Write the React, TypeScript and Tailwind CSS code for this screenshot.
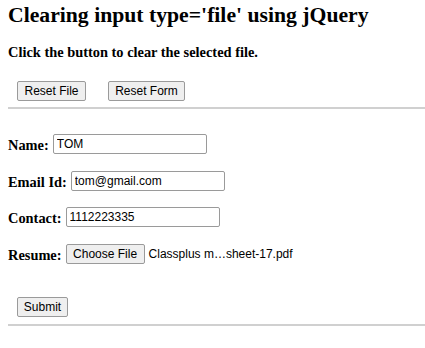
import React from 'react';

const serif = "font-['Liberation_Serif','Times_New_Roman',serif]";
const sans = "font-['Liberation_Sans',Arial,sans-serif]";

const Btn = ({ children, className }: { children: React.ReactNode; className?: string }) => (
  <button
    type="button"
    className={`${sans} h-[20px] px-0 text-center text-[12px] leading-none text-black bg-[#efefef] border border-[#9a9a9a] rounded-[2px] ${className || ''}`}
  >
    {children}
  </button>
);

const Field = ({ label, value, gap }: { label: string; value: string; gap: string }) => (
  <div className="flex items-center h-[20px]">
    <label className="text-[14.4px] font-bold leading-none pt-[3px]">{label}</label>
    <input
      readOnly
      value={value}
      className={`${sans} ${gap} w-[154px] h-[20px] px-[3px] text-[12px] text-black bg-white border border-[#9a9a9a] rounded-[2px] outline-none`}
    />
  </div>
);

export default function App() {
  return (
    <div className={`${serif} bg-white text-black w-[425px] h-[348px] overflow-hidden pl-2`}>
      <h2 className="pt-[2px] text-[21.7px] leading-[26px] font-bold">Clearing input type='file' using jQuery</h2>
      <h4 className="mt-[15px] text-[14.4px] leading-[18px] font-bold">Click the button to clear the selected file.</h4>

      <div className="mt-[20px] ml-[9px] flex gap-[22px]">
        <Btn className="w-[69px]">Reset File</Btn>
        <Btn className="w-[77px]">Reset Form</Btn>
      </div>

      <hr className="mt-[6px] border-0 border-t-2 border-[#d0d0d0]" />

      <form className="mt-[25px] flex flex-col gap-[16.5px]">
        <Field label="Name:" value="TOM" gap="ml-[4px]" />
        <Field label="Email Id:" value="tom@gmail.com" gap="ml-[4px]" />
        <Field label="Contact:" value="1112223335" gap="ml-[4px]" />
        <div className="flex items-center h-[20px]">
          <label className="text-[14.4px] font-bold leading-none pt-[3px]">Resume:</label>
          <Btn className="ml-[4px] w-[79px]">Choose File</Btn>
          <span className={`${sans} ml-[4px] text-[12px] leading-none`}>Classplus m…sheet-17.pdf</span>
        </div>
      </form>

      <div className="mt-[33px] ml-[9px] flex">
        <Btn className="w-[51px]">Submit</Btn>
      </div>

      <hr className="mt-[7px] border-0 border-t-2 border-[#d0d0d0]" />
    </div>
  );
}
